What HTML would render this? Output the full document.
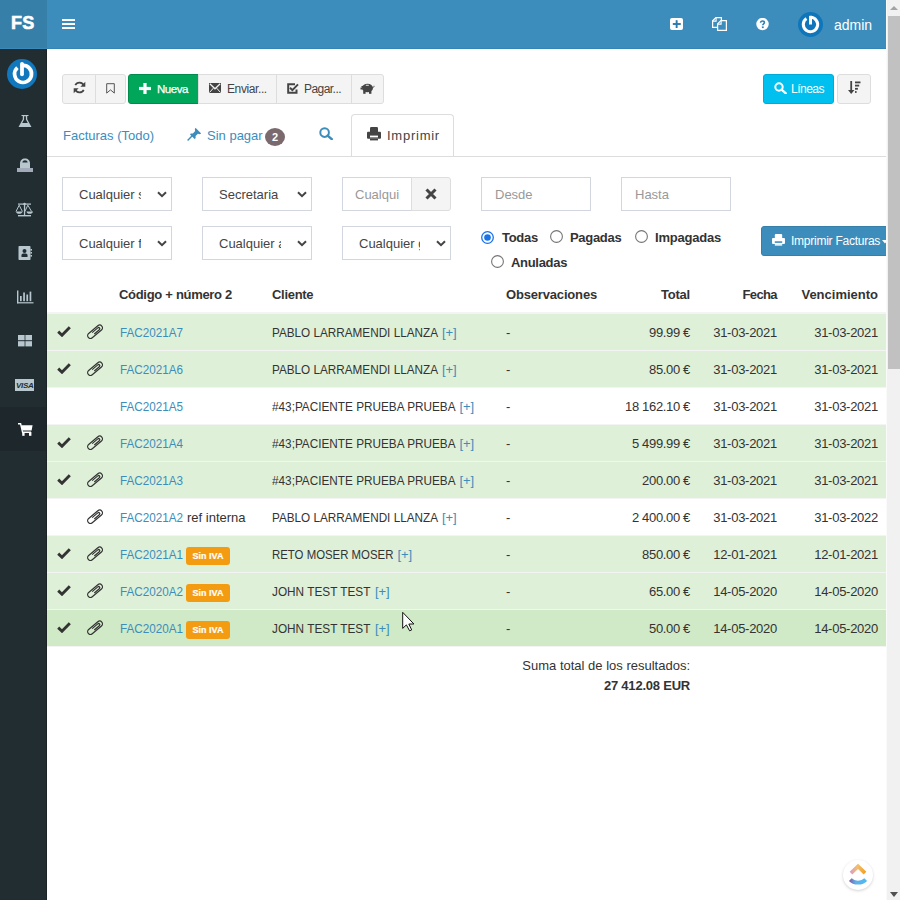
<!DOCTYPE html>
<html><head><meta charset="utf-8">
<style>
*{box-sizing:border-box;margin:0;padding:0}
html,body{width:900px;height:900px;overflow:hidden;background:#fff}
body{font-family:"Liberation Sans",sans-serif;color:#333;position:relative}
.a{position:absolute;white-space:nowrap}
.t13{font-size:13px;line-height:20px}
svg{display:block}
/* header */
#hdr{position:absolute;left:0;top:0;width:886px;height:49px;background:#3c8dbc;border-bottom:1px solid #3385b8}
#logo{position:absolute;left:0;top:0;width:47px;height:48px;background:#367fa9;border-bottom:0}
#side{position:absolute;left:0;top:49px;width:47px;height:851px;background:#222d32}
.btn{position:absolute;top:74px;height:30px;background:#f4f4f4;border:1px solid #ddd;color:#444}
.sel{position:absolute;height:34px;border:1px solid #d2d6de;background:#fff;overflow:hidden}
.sel span{position:absolute;left:16px;top:7px;font-size:13px;line-height:20px;color:#444;overflow:hidden;white-space:nowrap}
.sel svg{position:absolute}
.row{position:absolute;left:47px;width:839px;height:36px}
.g{background:#dff0d8}
.gh{background:#d0e9c6}
.bd{position:absolute;left:47px;width:839px;height:1px;background:#f4f4f4}
.lnk{color:#3c8dbc}
</style></head><body>

<div id="hdr"></div>
<div id="logo"></div><div class="a" style="left:0;top:48px;width:47px;height:1px;background:#3a89ba"></div>
<div class="a" style="left:11px;top:11px;font-size:18px;line-height:24px;font-weight:bold;color:#fff;letter-spacing:0.3px;-webkit-text-stroke:0.6px #fff">FS</div>
<!-- hamburger -->
<div class="a" style="left:62px;top:19px;width:13px;height:2px;background:#fff"></div>
<div class="a" style="left:62px;top:23px;width:13px;height:2px;background:#fff"></div>
<div class="a" style="left:62px;top:27px;width:13px;height:2px;background:#fff"></div>
<!-- plus-square -->
<svg class="a" style="left:670px;top:18px" width="13" height="12" viewBox="0 0 13 12"><rect x="0" y="0" width="13" height="12" rx="2" fill="#fff"/><rect x="5.7" y="2.2" width="1.9" height="7.8" fill="#2a7ab0"/><rect x="2.8" y="5.05" width="8" height="1.9" fill="#2a7ab0"/></svg>
<!-- copy -->
<svg class="a" style="left:712px;top:17px" width="15" height="14" viewBox="0 0 15 14"><path d="M5.4 10.4H0.6V3.9L3.9 0.6H9.4V3.8" fill="none" stroke="#fff" stroke-width="1.25"/><path d="M0.8 4.1H4.1V0.8" fill="none" stroke="#fff" stroke-width="1.1"/><path d="M5.6 6.9L8.9 3.6H14.4V13.4H5.6Z" fill="none" stroke="#fff" stroke-width="1.25"/><path d="M5.8 7.1H9.1V3.8" fill="none" stroke="#fff" stroke-width="1.1"/></svg>
<!-- question -->
<svg class="a" style="left:756px;top:18px" width="13" height="13" viewBox="0 0 13 13"><circle cx="6.5" cy="6.1" r="6.25" fill="#fff"/><path d="M4.6 4.8C4.6 3.7 5.4 3 6.5 3C7.6 3 8.4 3.7 8.4 4.6C8.4 5.9 6.8 6 6.8 7.3" fill="none" stroke="#2f82b8" stroke-width="1.6"/><rect x="5.9" y="8.4" width="1.8" height="1.7" fill="#2f82b8"/></svg>
<!-- avatar -->
<svg class="a" style="left:798px;top:12px" width="25" height="25" viewBox="0 0 30 30"><circle cx="15" cy="15" r="15" fill="#0f76bc"/><path d="M10.1 7.9A8.6 8.6 0 1 0 15 6.4" fill="none" stroke="#fff" stroke-width="3.7"/><path d="M15 4.6V15" stroke="#fff" stroke-width="3.6"/></svg>
<div class="a" style="left:834px;top:15px;font-size:14px;line-height:20px;color:#fff">admin</div>

<div id="side"></div>
<div class="a" style="left:0;top:407px;width:47px;height:44px;background:#1e282c"></div>
<div class="a" style="left:46px;top:49px;width:1px;height:851px;background:#1b2327"></div>
<svg class="a" style="left:7px;top:59px" width="30" height="30" viewBox="0 0 30 30"><circle cx="15" cy="15" r="15" fill="#1178be"/><path d="M10.4 8.6A8.5 8.5 0 1 0 15 6.5" fill="none" stroke="#fff" stroke-width="3.7"/><path d="M15 4.8V15.3" stroke="#fff" stroke-width="3.8" stroke-linecap="round"/></svg>
<!-- flask -->
<svg class="a" style="left:18px;top:114px" width="14" height="14" viewBox="0 0 14 14"><path d="M3.5 1H10.5V2H9.2V5.3L13.5 13H0.5L4.8 5.3V2H3.5Z" fill="#b8c7ce"/><path d="M6.1 2.2V5.6L4.2 9H9.8L7.9 5.6V2.2Z" fill="#222d32"/></svg>
<!-- landmark -->
<svg class="a" style="left:17px;top:158px" width="16" height="14" viewBox="0 0 16 14"><path d="M3 10V5.5C3 2.5 5 0.5 8 0.5C11 0.5 13 2.5 13 5.5V10Z" fill="#b8c7ce"/><path d="M5.3 4.5C5.6 3 6.6 2.3 8 2.3C9.4 2.3 10.4 3 10.7 4.5Z" fill="#222d32"/><rect x="0" y="10" width="16" height="4" fill="#a3abba"/></svg>
<!-- balance -->
<svg class="a" style="left:15px;top:202px" width="19" height="15" viewBox="0 0 19 15"><rect x="3" y="1.5" width="13" height="1.2" fill="#b8c7ce"/><rect x="8.9" y="1" width="1.3" height="12.5" fill="#b8c7ce"/><rect x="3" y="13" width="13" height="1.4" fill="#b8c7ce"/><circle cx="9.5" cy="2" r="1.2" fill="#b8c7ce"/><path d="M4.2 3.2L1 9.5M4.2 3.2L7.4 9.5M12.8 3.2L9.9 9.5M12.8 3.2L16.6 9.5" stroke="#b8c7ce" stroke-width="1"/><path d="M1 9.5H7.5C7.3 11 6 11.8 4.2 11.8C2.4 11.8 1.1 11 1 9.5ZM11.5 9.5H18C17.8 11 16.5 11.8 14.7 11.8C12.9 11.8 11.6 11 11.5 9.5Z" fill="#b8c7ce"/></svg>
<!-- address book -->
<svg class="a" style="left:18px;top:246px" width="14" height="14" viewBox="0 0 14 14"><rect x="0.5" y="0" width="12" height="14" rx="0.8" fill="#b8c7ce"/><rect x="12.5" y="3" width="1.5" height="1.6" fill="#b8c7ce"/><rect x="12.5" y="6" width="1.5" height="1.6" fill="#b8c7ce"/><rect x="12.5" y="9" width="1.5" height="1.6" fill="#b8c7ce"/><circle cx="6.5" cy="5" r="2" fill="#222d32"/><path d="M3.5 11V9.3C3.5 8.2 4.3 7.5 5.3 7.5H7.7C8.7 7.5 9.5 8.2 9.5 9.3V11Z" fill="#222d32"/></svg>
<!-- bar chart -->
<svg class="a" style="left:16px;top:290px" width="18" height="14" viewBox="0 0 18 14"><rect x="1" y="0.5" width="1.4" height="12.8" fill="#b8c7ce"/><rect x="1" y="12.2" width="16.5" height="1.2" fill="#b8c7ce"/><rect x="4" y="6" width="1.7" height="5.2" fill="#b8c7ce"/><rect x="7.2" y="2.5" width="1.7" height="8.7" fill="#b8c7ce"/><rect x="10.4" y="4.5" width="1.7" height="6.7" fill="#b8c7ce"/><rect x="13.6" y="1.6" width="1.7" height="9.6" fill="#b8c7ce"/></svg>
<!-- th-large -->
<svg class="a" style="left:18px;top:335px" width="14" height="12" viewBox="0 0 14 12"><rect x="0" y="0" width="6.6" height="5.2" fill="#b8c7ce"/><rect x="7.4" y="0" width="6.6" height="5.2" fill="#b8c7ce"/><rect x="0" y="6.2" width="6.6" height="5.2" fill="#b8c7ce"/><rect x="7.4" y="6.2" width="6.6" height="5.2" fill="#b8c7ce"/></svg>
<!-- visa -->
<svg class="a" style="left:15px;top:379px" width="19" height="12" viewBox="0 0 19 12"><rect x="0" y="0" width="19" height="12" fill="#b8c7ce"/><text x="9.7" y="9.3" text-anchor="middle" font-family="Liberation Sans" font-weight="bold" font-style="italic" font-size="8" fill="#222d32" letter-spacing="-0.3">VISA</text></svg>
<!-- cart -->
<svg class="a" style="left:18px;top:423px" width="15" height="13" viewBox="0 0 15 13"><path d="M0 0.8H2.6L4.6 9.3H13" fill="none" stroke="#fff" stroke-width="1.4"/><path d="M3.2 2.2H14.6L13.6 7.6H4.4Z" fill="#fff"/><rect x="4.2" y="9" width="2.4" height="3.8" fill="#fff"/><rect x="11" y="9" width="2.4" height="3.8" fill="#fff"/></svg>


<!-- toolbar -->
<div class="btn" style="left:62px;width:34px;border-radius:3px 0 0 3px"></div>
<div class="btn" style="left:95px;width:31px;border-radius:0 3px 3px 0"></div>
<svg class="a" style="left:73px;top:81px" width="13" height="13" viewBox="0 0 13 13"><path d="M10.8 4.6A4.6 4.6 0 0 0 2.3 4.2" fill="none" stroke="#444" stroke-width="1.7"/><path d="M12.3 0.8V5.7H7.4Z" fill="#444"/><path d="M2.2 8.4A4.6 4.6 0 0 0 10.7 8.8" fill="none" stroke="#444" stroke-width="1.7"/><path d="M0.7 12.2V7.3H5.6Z" fill="#444"/></svg>
<svg class="a" style="left:106px;top:83px" width="9" height="11" viewBox="0 0 9 11"><path d="M0.7 0.7H8.3V10.1L4.5 6.9L0.7 10.1Z" fill="none" stroke="#555" stroke-width="1"/></svg>
<div class="btn" style="left:128px;width:71px;background:#00a65a;border-color:#008d4c;border-radius:3px 0 0 3px"></div>
<div class="btn" style="left:198px;width:79px"></div>
<div class="btn" style="left:276px;width:76px"></div>
<div class="btn" style="left:351px;width:33px;border-radius:0 3px 3px 0"></div>
<svg class="a" style="left:139px;top:83px" width="12" height="11" viewBox="0 0 12 11"><rect x="4.4" y="0" width="3.2" height="11" fill="#fff"/><rect x="0" y="3.9" width="12" height="3.2" fill="#fff"/></svg>
<div class="a" style="left:157px;top:79px;font-size:11.5px;line-height:20px;color:#fff;letter-spacing:-0.45px;-webkit-text-stroke:0.25px #fff">Nueva</div>
<svg class="a" style="left:209px;top:83px" width="12" height="10" viewBox="0 0 12 10"><path d="M0 0H12V10H0Z" fill="#444"/><path d="M0.8 0.8L6 5.8L11.2 0.8" fill="none" stroke="#f4f4f4" stroke-width="1.2"/><path d="M0.5 9.5L4.3 5.2M11.5 9.5L7.7 5.2" stroke="#f4f4f4" stroke-width="1"/></svg>
<div class="a" style="left:227px;top:79px;font-size:12px;line-height:20px;color:#444;letter-spacing:-0.4px">Enviar...</div>
<svg class="a" style="left:287px;top:83px" width="12" height="11" viewBox="0 0 12 11"><path d="M9.5 6.5V9.8H1.2V1.2H8" fill="none" stroke="#444" stroke-width="2"/><path d="M3 4.8L5.4 7.1L11 1.4" fill="none" stroke="#444" stroke-width="2"/></svg>
<div class="a" style="left:304px;top:79px;font-size:12px;line-height:20px;color:#444;letter-spacing:-0.55px">Pagar...</div>
<svg class="a" style="left:360px;top:83px" width="15" height="11" viewBox="0 0 15 11"><ellipse cx="7.5" cy="5" rx="5.5" ry="4.3" fill="#444"/><path d="M1 3.5L3.5 2.5L3.5 6Z" fill="#444"/><rect x="3.2" y="7.5" width="2.4" height="3.3" fill="#444"/><rect x="9" y="7.5" width="2.4" height="3.3" fill="#444"/><path d="M12.5 4.5C13.8 4.5 14.3 3.6 14 2.8" fill="none" stroke="#444" stroke-width="0.9"/><rect x="5.8" y="1.8" width="3" height="0.9" fill="#f4f4f4"/><path d="M0.5 4.5H2.5V6.5H0.5Z" fill="#444"/></svg>

<div class="btn" style="left:763px;width:71px;background:#00c0ef;border-color:#00acd6;border-radius:3px"></div>
<svg class="a" style="left:774px;top:82px" width="13" height="12" viewBox="0 0 13 12"><circle cx="5" cy="5" r="3.7" fill="none" stroke="#fff" stroke-width="2"/><path d="M7.6 7.6L11.8 11.3" stroke="#fff" stroke-width="2.4" stroke-linecap="round"/></svg>
<div class="a" style="left:791px;top:79px;font-size:12px;line-height:20px;color:#fff;letter-spacing:-0.5px">Líneas</div>
<div class="btn" style="left:837px;width:34px;border-radius:3px"></div>
<svg class="a" style="left:848px;top:81px" width="13" height="13" viewBox="0 0 13 13"><rect x="2.3" y="0" width="1.8" height="10" fill="#444"/><path d="M0 9H6.4L3.2 13Z" fill="#444"/><rect x="7" y="0.5" width="5.5" height="1.8" fill="#444"/><rect x="7" y="3.7" width="4.2" height="1.8" fill="#444"/><rect x="7" y="6.9" width="2.9" height="1.8" fill="#444"/><rect x="7" y="10.1" width="1.6" height="1.8" fill="#444"/></svg>

<!-- tabs -->
<div class="a" style="left:47px;top:156px;width:839px;height:1px;background:#ddd"></div>
<div class="a" style="left:351px;top:114px;width:103px;height:42px;background:#fff;border:1px solid #ddd;border-bottom:none;border-radius:4px 4px 0 0"></div>
<div class="a t13 lnk" style="left:63px;top:126px">Facturas (Todo)</div>
<svg class="a" style="left:187px;top:127px" width="15" height="14" viewBox="0 0 15 14"><path d="M8.5 0.8L14.2 6.5L12.6 7.2L10.9 6.8L8.6 9.1L8.6 11.2L7.6 12L3 7.4L3.8 6.4L5.9 6.4L8.2 4.1L7.8 2.4Z" fill="#3c8dbc"/><path d="M5.2 8.8L0.6 13.4" stroke="#3c8dbc" stroke-width="1.4"/></svg>
<div class="a t13 lnk" style="left:207px;top:126px">Sin pagar</div>
<div class="a" style="left:265px;top:128px;width:20px;height:18px;border-radius:50%;background:#7b6a6d;color:#fff;font-size:11px;font-weight:bold;line-height:18px;text-align:center">2</div>
<svg class="a" style="left:319px;top:127px" width="14" height="13" viewBox="0 0 14 13"><circle cx="5.6" cy="5.6" r="4.3" fill="none" stroke="#3c8dbc" stroke-width="2"/><path d="M8.6 8.6L12.8 12.2" stroke="#3c8dbc" stroke-width="2.4" stroke-linecap="round"/></svg>
<svg class="a" style="left:367px;top:127px" width="14" height="14" viewBox="0 0 14 14"><rect x="3" y="0" width="8" height="5.5" rx="1.3" fill="#444"/><rect x="0" y="4.8" width="14" height="7" rx="1" fill="#444"/><rect x="3" y="8.6" width="8" height="1.8" fill="#fff"/><rect x="3" y="11.8" width="8" height="1.6" fill="#444"/></svg>
<div class="a t13" style="left:387px;top:126px;color:#444;letter-spacing:0.75px">Imprimir</div>


<!-- filters -->
<div class="sel" style="left:62px;top:177px;width:110px"><span style="width:62px">Cualquier serie</span></div><svg class="a" style="left:157px;top:191px" width="10" height="7" viewBox="0 0 10 7"><path d="M1 1.2L5 5.2L9 1.2" fill="none" stroke="#444" stroke-width="2"/></svg><div class="sel" style="left:202px;top:177px;width:110px"><span style="width:75px">Secretaria</span></div><svg class="a" style="left:297px;top:191px" width="10" height="7" viewBox="0 0 10 7"><path d="M1 1.2L5 5.2L9 1.2" fill="none" stroke="#444" stroke-width="2"/></svg><div class="sel" style="left:342px;top:177px;width:70px"><span style="left:12px;width:44px;color:#999">Cualquier cliente</span></div><div class="a" style="left:411px;top:177px;width:40px;height:34px;background:#f4f4f4;border:1px solid #ddd;border-radius:0 3px 3px 0"></div><svg class="a" style="left:425px;top:188px" width="12" height="12" viewBox="0 0 12 12"><path d="M1.5 1.5L10.5 10.5M10.5 1.5L1.5 10.5" stroke="#444" stroke-width="3"/></svg><div class="sel" style="left:481px;top:177px;width:110px"><span style="left:13px;width:80px;color:#999">Desde</span></div><div class="sel" style="left:621px;top:177px;width:110px"><span style="left:13px;width:80px;color:#999">Hasta</span></div><div class="sel" style="left:62px;top:226px;width:110px"><span style="width:62px">Cualquier forma de pago</span></div><svg class="a" style="left:157px;top:240px" width="10" height="7" viewBox="0 0 10 7"><path d="M1 1.2L5 5.2L9 1.2" fill="none" stroke="#444" stroke-width="2"/></svg><div class="sel" style="left:202px;top:226px;width:110px"><span style="width:62px">Cualquier agente</span></div><svg class="a" style="left:297px;top:240px" width="10" height="7" viewBox="0 0 10 7"><path d="M1 1.2L5 5.2L9 1.2" fill="none" stroke="#444" stroke-width="2"/></svg><div class="sel" style="left:342px;top:226px;width:109px"><span style="width:61px">Cualquier grupo</span></div><svg class="a" style="left:436px;top:240px" width="10" height="7" viewBox="0 0 10 7"><path d="M1 1.2L5 5.2L9 1.2" fill="none" stroke="#444" stroke-width="2"/></svg><svg class="a" style="left:481px;top:231px" width="13" height="13" viewBox="0 0 13 13"><circle cx="6.5" cy="6.5" r="5.8" fill="#fff" stroke="#1a73e8" stroke-width="1.3"/><circle cx="6.5" cy="6.5" r="3.3" fill="#1a73e8"/></svg><svg class="a" style="left:550px;top:230px" width="13" height="13" viewBox="0 0 13 13"><circle cx="6.5" cy="6.5" r="5.9" fill="#fff" stroke="#767676" stroke-width="1.1"/></svg><svg class="a" style="left:635px;top:230px" width="13" height="13" viewBox="0 0 13 13"><circle cx="6.5" cy="6.5" r="5.9" fill="#fff" stroke="#767676" stroke-width="1.1"/></svg><svg class="a" style="left:491px;top:255px" width="13" height="13" viewBox="0 0 13 13"><circle cx="6.5" cy="6.5" r="5.9" fill="#fff" stroke="#767676" stroke-width="1.1"/></svg><div class="a" style="left:502px;top:228px;font-size:13px;line-height:20px;font-weight:bold;color:#333;letter-spacing:-0.3px">Todas</div><div class="a" style="left:570px;top:228px;font-size:13px;line-height:20px;font-weight:bold;color:#333;letter-spacing:-0.3px">Pagadas</div><div class="a" style="left:655px;top:228px;font-size:13px;line-height:20px;font-weight:bold;color:#333;letter-spacing:-0.2px">Impagadas</div><div class="a" style="left:511px;top:253px;font-size:13px;line-height:20px;font-weight:bold;color:#333;letter-spacing:-0.3px">Anuladas</div><div class="a" style="left:761px;top:226px;width:140px;height:30px;background:#3c8dbc;border:1px solid #367fa9;border-radius:3px"></div><svg class="a" style="left:772px;top:234px" width="13" height="12" viewBox="0 0 14 13"><rect x="3" y="0" width="8" height="5" rx="1.2" fill="#fff"/><rect x="0" y="4.3" width="14" height="6.5" rx="1" fill="#fff"/><rect x="3" y="7.9" width="8" height="1.7" fill="#3c8dbc"/><rect x="3" y="11" width="8" height="1.6" fill="#fff"/></svg><div class="a" style="left:791px;top:231px;font-size:12px;line-height:20px;color:#fff;letter-spacing:-0.25px">Imprimir Facturas</div><svg class="a" style="left:882px;top:240px" width="6" height="4" viewBox="0 0 6 4"><path d="M0 0H6L3 3.5Z" fill="#fff"/></svg>

<!-- table -->
<div class="a" style="left:119px;top:285px;font-size:13px;line-height:20px;font-weight:bold;color:#333;letter-spacing:-0.3px">Código + número 2</div><div class="a" style="left:272px;top:285px;font-size:13px;line-height:20px;font-weight:bold;color:#333;letter-spacing:-0.3px">Cliente</div><div class="a" style="left:506px;top:285px;font-size:13px;line-height:20px;font-weight:bold;color:#333;letter-spacing:-0.17px">Observaciones</div><div class="a" style="right:210px;top:285px;font-size:13px;line-height:20px;font-weight:bold;color:#333;letter-spacing:-0.22px">Total</div><div class="a" style="right:123px;top:285px;font-size:13px;line-height:20px;font-weight:bold;color:#333;letter-spacing:-0.6px">Fecha</div><div class="a" style="right:22px;top:285px;font-size:13px;line-height:20px;font-weight:bold;color:#333;letter-spacing:0px">Vencimiento</div><div class="a" style="left:47px;top:312px;width:839px;height:2px;background:#f4f4f4"></div><div class="row g" style="top:314px"></div><svg class="a" style="left:57px;top:326px" width="14" height="11" viewBox="0 0 14 11"><path d="M1.2 5.6L5 9.2L12.8 1.2" fill="none" stroke="#333" stroke-width="2.9"/></svg><svg class="a" style="left:86px;top:323px" width="19" height="16" viewBox="0 0 19 16"><g transform="translate(9.2,8.6) rotate(-40)"><path d="M-6.2 -2.8H5.8A2.8 2.8 0 0 1 5.8 2.8H-6.2A2.8 2.8 0 0 1 -6.2 -2.8Z" fill="none" stroke="#333" stroke-width="1.2"/><path d="M-2.2 1.2H4.4A1.2 1.2 0 0 0 4.4 -1.2H-3" fill="none" stroke="#333" stroke-width="1.2"/></g></svg><div class="a t13 lnk" style="left:120px;top:323px;transform:scaleX(0.899);transform-origin:0 0">FAC2021A7</div><div class="a t13" style="left:272px;top:323px;transform:scaleX(0.902);transform-origin:0 0">PABLO LARRAMENDI LLANZA</div><div class="a t13 lnk" style="left:442px;top:323px;letter-spacing:-0.1px">[+]</div><div class="a t13" style="left:506px;top:323px">-</div><div class="a t13" style="right:210px;top:323px;letter-spacing:-0.34px">99.99 €</div><div class="a t13" style="right:123px;top:323px;letter-spacing:-0.27px">31-03-2021</div><div class="a t13" style="right:22px;top:323px;letter-spacing:-0.27px">31-03-2021</div><div class="bd" style="top:350px"></div><div class="row g" style="top:351px"></div><svg class="a" style="left:57px;top:363px" width="14" height="11" viewBox="0 0 14 11"><path d="M1.2 5.6L5 9.2L12.8 1.2" fill="none" stroke="#333" stroke-width="2.9"/></svg><svg class="a" style="left:86px;top:360px" width="19" height="16" viewBox="0 0 19 16"><g transform="translate(9.2,8.6) rotate(-40)"><path d="M-6.2 -2.8H5.8A2.8 2.8 0 0 1 5.8 2.8H-6.2A2.8 2.8 0 0 1 -6.2 -2.8Z" fill="none" stroke="#333" stroke-width="1.2"/><path d="M-2.2 1.2H4.4A1.2 1.2 0 0 0 4.4 -1.2H-3" fill="none" stroke="#333" stroke-width="1.2"/></g></svg><div class="a t13 lnk" style="left:120px;top:360px;transform:scaleX(0.899);transform-origin:0 0">FAC2021A6</div><div class="a t13" style="left:272px;top:360px;transform:scaleX(0.902);transform-origin:0 0">PABLO LARRAMENDI LLANZA</div><div class="a t13 lnk" style="left:442px;top:360px;letter-spacing:-0.1px">[+]</div><div class="a t13" style="left:506px;top:360px">-</div><div class="a t13" style="right:210px;top:360px;letter-spacing:-0.34px">85.00 €</div><div class="a t13" style="right:123px;top:360px;letter-spacing:-0.27px">31-03-2021</div><div class="a t13" style="right:22px;top:360px;letter-spacing:-0.27px">31-03-2021</div><div class="bd" style="top:387px"></div><div class="a t13 lnk" style="left:120px;top:397px;transform:scaleX(0.899);transform-origin:0 0">FAC2021A5</div><div class="a t13" style="left:272px;top:397px;transform:scaleX(0.905);transform-origin:0 0">#43;PACIENTE PRUEBA PRUEBA</div><div class="a t13 lnk" style="left:459.5px;top:397px;letter-spacing:-0.1px">[+]</div><div class="a t13" style="left:506px;top:397px">-</div><div class="a t13" style="right:210px;top:397px;letter-spacing:-0.34px">18 162.10 €</div><div class="a t13" style="right:123px;top:397px;letter-spacing:-0.27px">31-03-2021</div><div class="a t13" style="right:22px;top:397px;letter-spacing:-0.27px">31-03-2021</div><div class="bd" style="top:424px"></div><div class="row g" style="top:425px"></div><svg class="a" style="left:57px;top:437px" width="14" height="11" viewBox="0 0 14 11"><path d="M1.2 5.6L5 9.2L12.8 1.2" fill="none" stroke="#333" stroke-width="2.9"/></svg><svg class="a" style="left:86px;top:434px" width="19" height="16" viewBox="0 0 19 16"><g transform="translate(9.2,8.6) rotate(-40)"><path d="M-6.2 -2.8H5.8A2.8 2.8 0 0 1 5.8 2.8H-6.2A2.8 2.8 0 0 1 -6.2 -2.8Z" fill="none" stroke="#333" stroke-width="1.2"/><path d="M-2.2 1.2H4.4A1.2 1.2 0 0 0 4.4 -1.2H-3" fill="none" stroke="#333" stroke-width="1.2"/></g></svg><div class="a t13 lnk" style="left:120px;top:434px;transform:scaleX(0.899);transform-origin:0 0">FAC2021A4</div><div class="a t13" style="left:272px;top:434px;transform:scaleX(0.905);transform-origin:0 0">#43;PACIENTE PRUEBA PRUEBA</div><div class="a t13 lnk" style="left:459.5px;top:434px;letter-spacing:-0.1px">[+]</div><div class="a t13" style="left:506px;top:434px">-</div><div class="a t13" style="right:210px;top:434px;letter-spacing:-0.34px">5 499.99 €</div><div class="a t13" style="right:123px;top:434px;letter-spacing:-0.27px">31-03-2021</div><div class="a t13" style="right:22px;top:434px;letter-spacing:-0.27px">31-03-2021</div><div class="bd" style="top:461px"></div><div class="row g" style="top:462px"></div><svg class="a" style="left:57px;top:474px" width="14" height="11" viewBox="0 0 14 11"><path d="M1.2 5.6L5 9.2L12.8 1.2" fill="none" stroke="#333" stroke-width="2.9"/></svg><svg class="a" style="left:86px;top:471px" width="19" height="16" viewBox="0 0 19 16"><g transform="translate(9.2,8.6) rotate(-40)"><path d="M-6.2 -2.8H5.8A2.8 2.8 0 0 1 5.8 2.8H-6.2A2.8 2.8 0 0 1 -6.2 -2.8Z" fill="none" stroke="#333" stroke-width="1.2"/><path d="M-2.2 1.2H4.4A1.2 1.2 0 0 0 4.4 -1.2H-3" fill="none" stroke="#333" stroke-width="1.2"/></g></svg><div class="a t13 lnk" style="left:120px;top:471px;transform:scaleX(0.899);transform-origin:0 0">FAC2021A3</div><div class="a t13" style="left:272px;top:471px;transform:scaleX(0.905);transform-origin:0 0">#43;PACIENTE PRUEBA PRUEBA</div><div class="a t13 lnk" style="left:459.5px;top:471px;letter-spacing:-0.1px">[+]</div><div class="a t13" style="left:506px;top:471px">-</div><div class="a t13" style="right:210px;top:471px;letter-spacing:-0.34px">200.00 €</div><div class="a t13" style="right:123px;top:471px;letter-spacing:-0.27px">31-03-2021</div><div class="a t13" style="right:22px;top:471px;letter-spacing:-0.27px">31-03-2021</div><div class="bd" style="top:498px"></div><svg class="a" style="left:86px;top:508px" width="19" height="16" viewBox="0 0 19 16"><g transform="translate(9.2,8.6) rotate(-40)"><path d="M-6.2 -2.8H5.8A2.8 2.8 0 0 1 5.8 2.8H-6.2A2.8 2.8 0 0 1 -6.2 -2.8Z" fill="none" stroke="#333" stroke-width="1.2"/><path d="M-2.2 1.2H4.4A1.2 1.2 0 0 0 4.4 -1.2H-3" fill="none" stroke="#333" stroke-width="1.2"/></g></svg><div class="a t13 lnk" style="left:120px;top:508px;transform:scaleX(0.899);transform-origin:0 0">FAC2021A2</div><div class="a t13" style="left:187px;top:508px">ref interna</div><div class="a t13" style="left:272px;top:508px;transform:scaleX(0.902);transform-origin:0 0">PABLO LARRAMENDI LLANZA</div><div class="a t13 lnk" style="left:442px;top:508px;letter-spacing:-0.1px">[+]</div><div class="a t13" style="left:506px;top:508px">-</div><div class="a t13" style="right:210px;top:508px;letter-spacing:-0.34px">2 400.00 €</div><div class="a t13" style="right:123px;top:508px;letter-spacing:-0.27px">31-03-2021</div><div class="a t13" style="right:22px;top:508px;letter-spacing:-0.27px">31-03-2022</div><div class="bd" style="top:535px"></div><div class="row g" style="top:536px"></div><svg class="a" style="left:57px;top:548px" width="14" height="11" viewBox="0 0 14 11"><path d="M1.2 5.6L5 9.2L12.8 1.2" fill="none" stroke="#333" stroke-width="2.9"/></svg><svg class="a" style="left:86px;top:545px" width="19" height="16" viewBox="0 0 19 16"><g transform="translate(9.2,8.6) rotate(-40)"><path d="M-6.2 -2.8H5.8A2.8 2.8 0 0 1 5.8 2.8H-6.2A2.8 2.8 0 0 1 -6.2 -2.8Z" fill="none" stroke="#333" stroke-width="1.2"/><path d="M-2.2 1.2H4.4A1.2 1.2 0 0 0 4.4 -1.2H-3" fill="none" stroke="#333" stroke-width="1.2"/></g></svg><div class="a t13 lnk" style="left:120px;top:545px;transform:scaleX(0.899);transform-origin:0 0">FAC2021A1</div><div class="a" style="left:186px;top:547px;width:44px;height:18px;background:#f39c12;border-radius:3px;color:#fff;font-size:9px;font-weight:bold;line-height:18px;text-align:center;letter-spacing:0px;-webkit-text-stroke:0.2px #fff">Sin IVA</div><div class="a t13" style="left:272px;top:545px;transform:scaleX(0.877);transform-origin:0 0">RETO MOSER MOSER</div><div class="a t13 lnk" style="left:397.5px;top:545px;letter-spacing:-0.1px">[+]</div><div class="a t13" style="left:506px;top:545px">-</div><div class="a t13" style="right:210px;top:545px;letter-spacing:-0.34px">850.00 €</div><div class="a t13" style="right:123px;top:545px;letter-spacing:-0.27px">12-01-2021</div><div class="a t13" style="right:22px;top:545px;letter-spacing:-0.27px">12-01-2021</div><div class="bd" style="top:572px"></div><div class="row g" style="top:573px"></div><svg class="a" style="left:57px;top:585px" width="14" height="11" viewBox="0 0 14 11"><path d="M1.2 5.6L5 9.2L12.8 1.2" fill="none" stroke="#333" stroke-width="2.9"/></svg><svg class="a" style="left:86px;top:582px" width="19" height="16" viewBox="0 0 19 16"><g transform="translate(9.2,8.6) rotate(-40)"><path d="M-6.2 -2.8H5.8A2.8 2.8 0 0 1 5.8 2.8H-6.2A2.8 2.8 0 0 1 -6.2 -2.8Z" fill="none" stroke="#333" stroke-width="1.2"/><path d="M-2.2 1.2H4.4A1.2 1.2 0 0 0 4.4 -1.2H-3" fill="none" stroke="#333" stroke-width="1.2"/></g></svg><div class="a t13 lnk" style="left:120px;top:582px;transform:scaleX(0.899);transform-origin:0 0">FAC2020A2</div><div class="a" style="left:186px;top:584px;width:44px;height:18px;background:#f39c12;border-radius:3px;color:#fff;font-size:9px;font-weight:bold;line-height:18px;text-align:center;letter-spacing:0px;-webkit-text-stroke:0.2px #fff">Sin IVA</div><div class="a t13" style="left:272px;top:582px;transform:scaleX(0.908);transform-origin:0 0">JOHN TEST TEST</div><div class="a t13 lnk" style="left:375px;top:582px;letter-spacing:-0.1px">[+]</div><div class="a t13" style="left:506px;top:582px">-</div><div class="a t13" style="right:210px;top:582px;letter-spacing:-0.34px">65.00 €</div><div class="a t13" style="right:123px;top:582px;letter-spacing:-0.27px">14-05-2020</div><div class="a t13" style="right:22px;top:582px;letter-spacing:-0.27px">14-05-2020</div><div class="bd" style="top:609px"></div><div class="row gh" style="top:610px"></div><svg class="a" style="left:57px;top:622px" width="14" height="11" viewBox="0 0 14 11"><path d="M1.2 5.6L5 9.2L12.8 1.2" fill="none" stroke="#333" stroke-width="2.9"/></svg><svg class="a" style="left:86px;top:619px" width="19" height="16" viewBox="0 0 19 16"><g transform="translate(9.2,8.6) rotate(-40)"><path d="M-6.2 -2.8H5.8A2.8 2.8 0 0 1 5.8 2.8H-6.2A2.8 2.8 0 0 1 -6.2 -2.8Z" fill="none" stroke="#333" stroke-width="1.2"/><path d="M-2.2 1.2H4.4A1.2 1.2 0 0 0 4.4 -1.2H-3" fill="none" stroke="#333" stroke-width="1.2"/></g></svg><div class="a t13 lnk" style="left:120px;top:619px;transform:scaleX(0.899);transform-origin:0 0">FAC2020A1</div><div class="a" style="left:186px;top:621px;width:44px;height:18px;background:#f39c12;border-radius:3px;color:#fff;font-size:9px;font-weight:bold;line-height:18px;text-align:center;letter-spacing:0px;-webkit-text-stroke:0.2px #fff">Sin IVA</div><div class="a t13" style="left:272px;top:619px;transform:scaleX(0.908);transform-origin:0 0">JOHN TEST TEST</div><div class="a t13 lnk" style="left:375px;top:619px;letter-spacing:-0.1px">[+]</div><div class="a t13" style="left:506px;top:619px">-</div><div class="a t13" style="right:210px;top:619px;letter-spacing:-0.34px">50.00 €</div><div class="a t13" style="right:123px;top:619px;letter-spacing:-0.27px">14-05-2020</div><div class="a t13" style="right:22px;top:619px;letter-spacing:-0.27px">14-05-2020</div><div class="a" style="left:47px;top:646px;width:839px;height:1px;background:#f4f4f4"></div><div class="a t13" style="right:210px;top:656px">Suma total de los resultados:</div><div class="a t13" style="right:210px;top:676px;font-weight:bold;letter-spacing:-0.22px">27 412.08 EUR</div>
<div class="a" style="left:886px;top:0;width:14px;height:900px;background:#f1f1f1;border-left:1px solid #fafafa"></div><div class="a" style="left:888px;top:16px;width:12px;height:353px;background:#c1c1c1"></div><svg class="a" style="left:890px;top:6px" width="8" height="4" viewBox="0 0 8 4"><path d="M0 4H8L4 0Z" fill="#a3a3a3"/></svg><svg class="a" style="left:890px;top:892px" width="8" height="5" viewBox="0 0 8 5"><path d="M0 0H8L4 5Z" fill="#505050"/></svg><div class="a" style="left:843px;top:860px;width:30px;height:30px;border-radius:50%;background:#fff;box-shadow:0 1px 3px rgba(0,0,0,0.18)"></div><svg class="a" style="left:848px;top:863px" width="20" height="24" viewBox="0 0 20 24"><path d="M3 10.2L10 3.4L17 10.2" fill="none" stroke="url(#cg1)" stroke-width="3.8"/><path d="M2.3 16.6C6 20.6 14 20.6 17.7 16.6" fill="none" stroke="url(#cg2)" stroke-width="3.8"/><defs><linearGradient id="cg1" x1="0" x2="1"><stop offset="0" stop-color="#d9a0c0"/><stop offset="0.45" stop-color="#f0c070"/><stop offset="1" stop-color="#f5a020"/></linearGradient><linearGradient id="cg2" x1="0" x2="1"><stop offset="0" stop-color="#7b68b0"/><stop offset="0.35" stop-color="#60b0e8"/><stop offset="1" stop-color="#50b8f0"/></linearGradient></defs></svg><svg class="a" style="left:401px;top:611px" width="16" height="22" viewBox="0 0 16 22"><path d="M1.7 1.3V17.4L5.4 13.9L8.6 19.8L10.7 18.9L7.8 13H12.9Z" fill="#fff" stroke="#111" stroke-width="1" stroke-linejoin="round"/></svg>
</body></html>
